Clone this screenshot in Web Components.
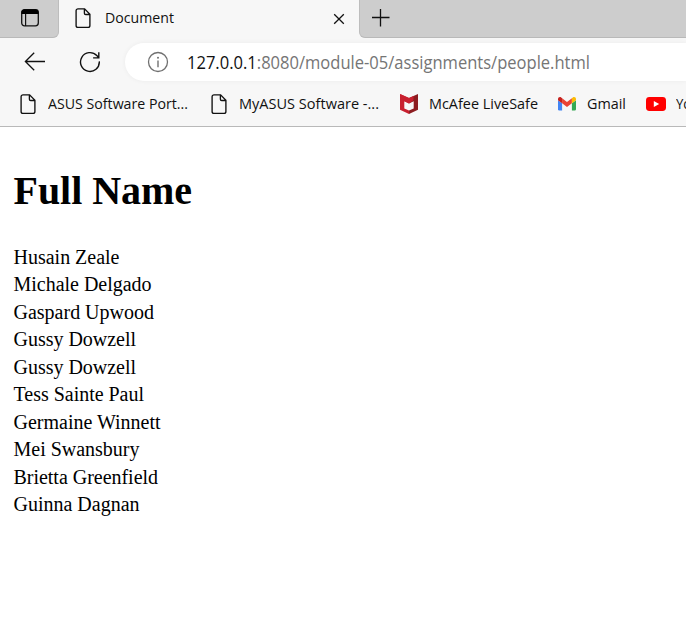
<!DOCTYPE html>
<html lang="en"><head><meta charset="utf-8"><title>Document</title>
<style>
html,body{margin:0;height:617px;overflow:hidden;background:#fff}
</style></head><body>
<browser-window></browser-window>
<script>
const define=(name,html,after)=>customElements.define(name,class extends HTMLElement{
  connectedCallback(){
    if(this.shadowRoot)return;
    const t=document.createElement('template');t.innerHTML=html;
    this.attachShadow({mode:'open'}).append(t.content.cloneNode(true));
    if(after)after.call(this);
  }
});

// A single line of text fitted to its "width": condensed when "narrow" is set, tracked otherwise.
define('fit-text',`<style>:host{display:block;white-space:nowrap;flex:none}span{display:inline-block;transform-origin:0 50%}</style><span><slot></slot></span>`,function(){
  const w=+this.getAttribute('width'),s=this.shadowRoot.querySelector('span');
  if(!w)return;
  this.style.width=w+'px';
  const natural=s.getBoundingClientRect().width;
  if(this.hasAttribute('narrow'))s.style.transform=`scaleX(${w/natural})`;
  else s.style.letterSpacing=(w-natural)/this.textContent.length+'px';
});

const icons={
 page:[16,20,'<path d="M3 .8h6.6l5.3 5.4v11.2a1.9 1.9 0 0 1-1.9 1.9H3a1.9 1.9 0 0 1-1.9-1.9V2.7A1.9 1.9 0 0 1 3 .8zM9.4 1v4.2a1.3 1.3 0 0 0 1.3 1.3h4" fill="none" stroke="#111" stroke-width="1.35"/>'],
 tabs:[18,18,'<rect x=".7" y=".7" width="16.6" height="16.2" rx="2.8" fill="none" stroke="#111" stroke-width="1.3"/><path d="M.5 5V3A2.8 2.8 0 0 1 3.3.4h11.4A2.8 2.8 0 0 1 17.5 3v2z"/><path d="M4.600 5v12" stroke="#111" stroke-width="1.2"/>'],
 close:[12,12,'<path d="M1.200 1.200l9.600 9.600M10.800 1.200L1.200 10.800" stroke="#111" stroke-width="1.3"/>'],
 plus:[18,18,'<path d="M0 8.500h17.500M8.500 0v17.500" stroke="#111" stroke-width="1.3"/>'],
 back:[22,20,'<path d="M21 9.500H1.400M10.200 .8L1.400 9.500l8.800 8.700" fill="none" stroke="#111" stroke-width="1.3"/>'],
 reload:[22,22,'<path d="M20.300 10.400A9.400 9.400 0 1 1 17.800 4.600l2 2.200M19.800 1.200v5.700h-5.700" fill="none" stroke="#111" stroke-width="1.4"/>'],
 info:[22,22,'<circle cx="11" cy="11" r="9.500" fill="none" stroke="#707070" stroke-width="1.3"/><path d="M11 9.400v6.800" stroke="#666" stroke-width="1.300"/><circle cx="11" cy="6.700" r=".95" fill="#666"/>'],
 mcafee:[18,20,'<path d="M0 0l9 4v5.500L4.300 7.200v7.300L9 16.600V20l-9-4.200z" fill="#c8202f"/><path d="M18 0L9 4v5.500l4.700-2.300v7.300L9 16.600V20l9-4.200z" fill="#8c1d21"/><path d="M0 0l9 4 4.500-2v4.200L9 9.500 3.500 6.700z" fill="#c8202f"/>'],
 gmail:[18,14,'<path d="M0 3.200l4.100 3V13.500H1.300A1.300 1.300 0 0 1 0 12.200z" fill="#4285f4"/><path d="M18 3.200l-4.100 3v7.300h2.800a1.300 1.300 0 0 0 1.300-1.300z" fill="#34a853"/><path d="M4.100 1.300L9 5l4.900-3.700v4.900L9 9.900 4.100 6.200z" fill="#ea4335"/><path d="M0 3.200V2C0 .3 1.900-.6 3.200.5l.9.8v4.900z" fill="#c5221f"/><path d="M18 3.200V2c0-1.700-1.900-2.600-3.200-1.500l-.9.800v4.900z" fill="#fbbc04"/>'],
 youtube:[20,14,'<rect width="20" height="14" rx="3.400" fill="#f00"/><path d="M7.800 4l5.400 3-5.400 3z" fill="#fff"/>']
};
define('ui-icon','<style>:host{display:block;flex:none}svg{display:block}</style>',function(){
  const [w,h,p]=icons[this.getAttribute('name')];
  const t=document.createElement('template');
  t.innerHTML=`<svg width="${w}" height="${h}" viewBox="0 0 ${w} ${h}">${p}</svg>`;
  this.shadowRoot.append(t.content);
});

define('tab-strip',`<style>
:host{display:flex;height:38px;background:#f7f7f7}
.side{box-sizing:border-box;background:#cdcdcd;border-bottom:1px solid #b9b9b9}
.left{width:59px;padding:9px 0 0 21px;border-right:1px solid #bdbdbd;border-radius:0 0 6px 0}
.tab{display:flex;align-items:center;width:300px;height:36px;box-sizing:border-box;padding-left:16px;font-size:15px}
.tab fit-text{margin:-2px 0 0 14px}
.tab .x{margin:2px 0 0 159px}
.right{flex:1;padding:9px 0 0 12px;border-left:1px solid #bdbdbd;border-radius:0 0 0 6px}
</style><div class="side left"><ui-icon name="tabs"></ui-icon></div>
<div class="tab"><ui-icon name="page"></ui-icon><fit-text narrow width="69">Document</fit-text><ui-icon class="x" name="close"></ui-icon></div>
<div class="side right"><ui-icon name="plus"></ui-icon></div>`);

define('address-bar',`<style>
:host{display:flex;height:48px;box-sizing:border-box;padding:5px 0 5px 24px;align-items:center;background:#f7f7f7}
.reload{margin-left:33px}
.box{display:flex;align-items:center;flex:1;height:38px;margin-left:23.5px;padding-left:22px;background:#fff;border-radius:19px 0 0 19px;box-shadow:0 0 5px #0000000d;font-size:18px;color:#757575}
fit-text{margin:-1px 0 0 18.5px}b{font-weight:400;color:#111}
</style><ui-icon name="back"></ui-icon><ui-icon class="reload" name="reload"></ui-icon>
<div class="box"><ui-icon name="info"></ui-icon><fit-text narrow width="403"><b>127.0.0.1</b>:8080/module-05/assignments/people.html</fit-text></div>`);

define('book-mark',`<style>:host{display:flex;align-items:center;flex:none}fit-text{margin:-2px 0 0 var(--gap,12px)}</style>`,function(){
  const i=document.createElement('ui-icon'),f=document.createElement('fit-text');
  i.setAttribute('name',this.getAttribute('icon'));
  f.setAttribute('width',this.getAttribute('width'));f.setAttribute('narrow','');
  f.textContent=this.getAttribute('label');
  this.shadowRoot.append(i,f);
});

define('bookmark-bar',`<style>
:host{display:flex;height:41px;box-sizing:border-box;padding:0 0 5px 20px;align-items:center;background:#f7f7f7;border-bottom:1px solid #b9b9b9;font-size:15px;overflow:hidden}
</style>
<book-mark icon="page" label="ASUS Software Port..." width="140"></book-mark>
<book-mark icon="page" label="MyASUS Software -..." width="140" style="margin-left:23px"></book-mark>
<book-mark icon="mcafee" label="McAfee LiveSafe" width="109" style="margin-left:21px;--gap:11px"></book-mark>
<book-mark icon="gmail" label="Gmail" width="39" style="margin-left:20px;--gap:11px"></book-mark>
<book-mark icon="youtube" label="YouTube" width="54" style="margin-left:20px;--gap:10px"></book-mark>`);

define('people-page',`<style>
:host{display:block;padding:0 13.5px;font-family:"Liberation Serif",serif;font-size:20px;color:#000}
h1{margin:0;padding-top:41px;font-size:40px;line-height:46px}
.list{margin-top:29.5px;line-height:27.5px}
</style><h1><fit-text width="178.5">Full Name</fit-text></h1><div class="list"></div>`,function(){
  const l=this.shadowRoot.querySelector('.list');
  [['Husain Zeale',106],['Michale Delgado',138],['Gaspard Upwood',140.5],['Gussy Dowzell',122.5],['Gussy Dowzell',122.5],['Tess Sainte Paul',130.5],['Germaine Winnett',147],['Mei Swansbury',126],['Brietta Greenfield',144.5],['Guinna Dagnan',126]].forEach(([n,w])=>{
    const f=document.createElement('fit-text');f.textContent=n;f.setAttribute('width',w);l.append(f);
  });
});

define('browser-window',`<style>:host{display:block;font-family:"Open Sans","Noto Sans",sans-serif;color:#111}</style>
<tab-strip></tab-strip><address-bar></address-bar><bookmark-bar></bookmark-bar><people-page></people-page>`);
</script></body></html>
